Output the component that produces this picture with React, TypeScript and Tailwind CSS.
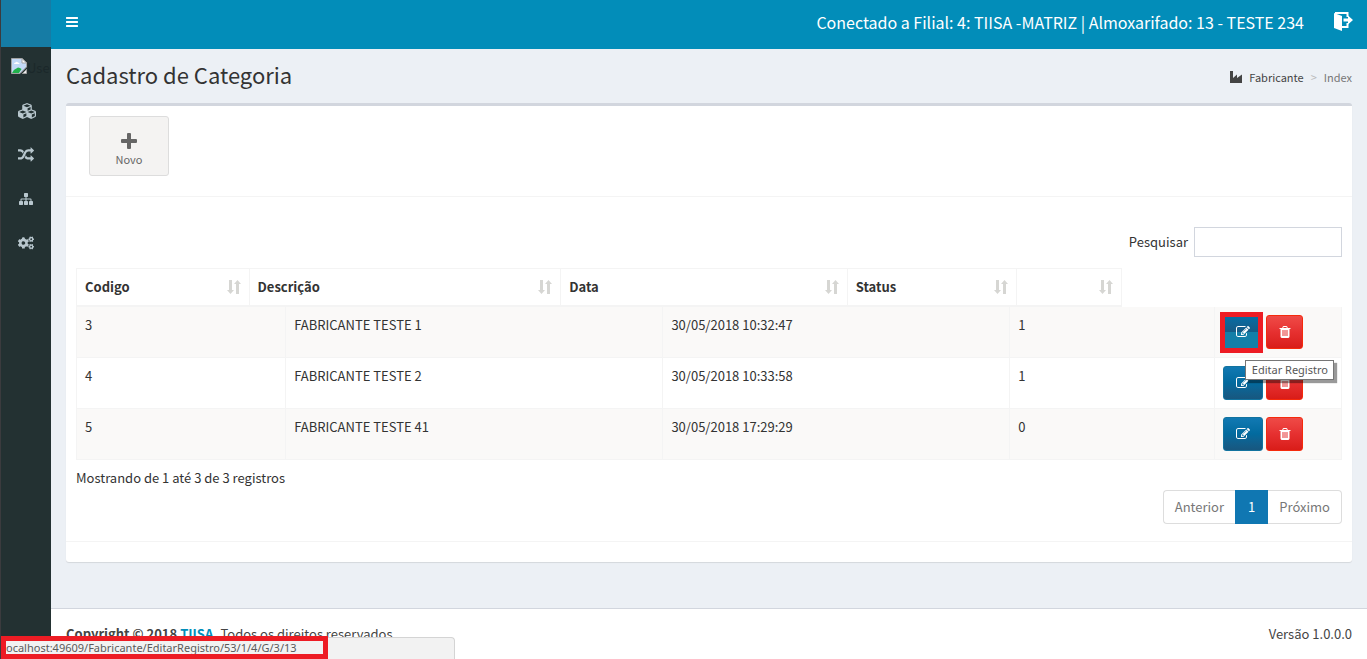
import type { ReactNode } from "react";
import { FaCogs, FaCubes } from "react-icons/fa";

const BARS =
  "M1664 1344v128q0 26-19 45t-45 19h-1408q-26 0-45-19t-19-45v-128q0-26 19-45t45-19h1408q26 0 45 19t19 45zm0-512v128q0 26-19 45t-45 19h-1408q-26 0-45-19t-19-45v-128q0-26 19-45t45-19h1408q26 0 45 19t19 45zm0-512v128q0 26-19 45t-45 19h-1408q-26 0-45-19t-19-45v-128q0-26 19-45t45-19h1408q26 0 45 19t19 45z";
const EDIT =
  "M888 1184l116-116-152-152-116 116v56h96v96h56zm440-720q-16-16-33 1l-350 350q-17 17-1 33t33-1l350-350q17-17 1-33zm80 594v190q0 119-84.5 203.5t-203.5 84.5h-832q-119 0-203.5-84.5t-84.5-203.5v-832q0-119 84.5-203.5t203.5-84.5h832q63 0 117 25 15 7 18 23 3 17-9 29l-49 49q-14 14-32 8-23-6-45-6h-832q-66 0-113 47t-47 113v832q0 66 47 113t113 47h832q66 0 113-47t47-113v-126q0-13 9-22l64-64q15-15 35-7t20 29zm-96-738l288 288-672 672h-288v-288zm444 132l-92 92-288-288 92-92q28-28 68-28t68 28l152 152q28 28 28 68t-28 68z";
const TRASH =
  "M704 1376v-704q0-14-9-23t-23-9h-64q-14 0-23 9t-9 23v704q0 14 9 23t23 9h64q14 0 23-9t9-23zm256 0v-704q0-14-9-23t-23-9h-64q-14 0-23 9t-9 23v704q0 14 9 23t23 9h64q14 0 23-9t9-23zm256 0v-704q0-14-9-23t-23-9h-64q-14 0-23 9t-9 23v704q0 14 9 23t23 9h64q14 0 23-9t9-23zm-544-992h448l-48-117q-7-9-17-11h-317q-10 2-17 11zm928 32v64q0 14-9 23t-23 9h-96v948q0 83-47 143.5t-113 60.5h-832q-66 0-113-58.5t-47-141.5v-952h-96q-14 0-23-9t-9-23v-64q0-14 9-23t23-9h309l70-167q15-37 54-63t79-26h320q40 0 79 26t54 63l70 167h309q14 0 23 9t9 23z";
const RANDOM =
  "M666 481q-60 92-137 273-22-45-37-72.5t-40.5-63.5-51-56.5-63-35-81.5-14.5h-224q-14 0-23-9t-9-23v-192q0-14 9-23t23-9h224q250 0 410 225zm1126 799q0 14-9 23l-320 320q-9 9-23 9-13 0-22.5-9.5t-9.5-22.5v-192q-32 0-85 .5t-81 1-73-1-71-5-64-10.5-63-18.5-58-28.5-59-40-55-53.5-56-69.5q59-93 136-273 22 45 37 72.5t40.5 63.5 51 56.5 63 35 81.5 14.5h256v-192q0-14 9-23t23-9q12 0 24 10l319 319q9 9 9 23zm0-896q0 14-9 23l-320 320q-9 9-23 9-13 0-22.5-9.5t-9.5-22.5v-192h-256q-48 0-87 15t-69 45-51 61.5-45 77.5q-32 62-78 171-29 66-49.5 111t-54 105-64 100-74 83-90 68.5-106.5 42-128 16.5h-224q-14 0-23-9t-9-23v-192q0-14 9-23t23-9h224q48 0 87-15t69-45 51-61.5 45-77.5q32-62 78-171 29-66 49.5-111t54-105 64-100 74-83 90-68.5 106.5-42 128-16.5h256v-192q0-14 9-23t23-9q12 0 24 10l319 319q9 9 9 23z";
const SITEMAP =
  "M1792 1248v320q0 40-28 68t-68 28h-320q-40 0-68-28t-28-68v-320q0-40 28-68t68-28h96v-192h-512v192h96q40 0 68 28t28 68v320q0 40-28 68t-68 28h-320q-40 0-68-28t-28-68v-320q0-40 28-68t68-28h96v-192h-512v192h96q40 0 68 28t28 68v320q0 40-28 68t-68 28h-320q-40 0-68-28t-28-68v-320q0-40 28-68t68-28h96v-192q0-52 38-90t90-38h512v-192h-96q-40 0-68-28t-28-68v-320q0-40 28-68t68-28h320q40 0 68 28t28 68v320q0 40-28 68t-68 28h-96v192h512q52 0 90 38t38 90v192h96q40 0 68 28t28 68z";

function Glyph({ d, className }: { d: string; className: string }) {
  return (
    <svg viewBox="0 0 1792 1792" fill="currentColor" aria-hidden="true" className={className}>
      <path d={d} />
    </svg>
  );
}

function BrokenImage() {
  return (
    <svg viewBox="0 0 16 16" aria-hidden="true" className="size-4 shrink-0">
      <path d="M.5.5h10.5l4.500 4.500v4L9 15.500H.5z" fill="#c3d9f7" stroke="#a3a3a3" />
      <path d="M11 .5V5h4.500z" fill="#fff" stroke="#a3a3a3" />
      <path d="M3 6q0-1.500 1.500-1.500Q5.500 3 7 4.500 8.500 4.500 8.500 6z" fill="#fff" />
      <path d="M1 15q2-4 6-5.500 2 0 3.500 1.500L8 15z" fill="#22b14c" />
      <path d="M11.500 15.500l4-4v4z" fill="#eee" stroke="#a3a3a3" />
    </svg>
  );
}

function SortIcon() {
  return (
    <svg viewBox="0 0 14 14" fill="#d6d6d3" aria-hidden="true" className="size-3.5 shrink-0">
      <path d="M2 0h3v10h2L3.500 14 0 10h2zM9 14h3V4h2L10.500 0 7 4h2z" />
    </svg>
  );
}

function SideLink({ label, children }: { label: string; children: ReactNode }) {
  return (
    <a href="#" aria-label={label} className="flex h-11 items-center justify-center text-[#b8c7ce]">
      {children}
    </a>
  );
}

const columns = [
  { label: "Codigo", width: "w-[16.600%]" },
  { label: "Descrição", width: "w-[29.800%]" },
  { label: "Data", width: "w-[27.400%]" },
  { label: "Status", width: "w-[16.200%]" },
  { label: "", width: "w-[10%]" },
];

const rows = [
  { id: 3, name: "FABRICANTE TESTE 1", date: "30/05/2018 10:32:47", status: 1 },
  { id: 4, name: "FABRICANTE TESTE 2", date: "30/05/2018 10:33:58", status: 1 },
  { id: 5, name: "FABRICANTE TESTE 41", date: "30/05/2018 17:29:29", status: 0 },
];

const cell = "border-r border-b border-[#f4f4f4] px-2 pt-2 text-left align-top";

export default function App() {
  return (
    <div className="flex min-h-screen bg-[#ecf0f5] font-['Noto_Sans_CJK_SC',sans-serif] text-[13px] leading-5 text-[#333]">
      <aside className="w-[51px] shrink-0 overflow-hidden border-l border-[#3b3b3e] bg-[#233132]">
        <div className="h-[47px] bg-[#167ca5]" />
        <div className="flex h-[42px] items-center overflow-hidden pb-1 pl-2.5 text-[#1b282a]">
          <BrokenImage />
          <span className="pt-1">User</span>
        </div>
        <nav>
          <SideLink label="Cadastros">
            <FaCubes className="ml-0.5 size-[18px]" />
          </SideLink>
          <SideLink label="Movimentos">
            <Glyph d={RANDOM} className="size-4" />
          </SideLink>
          <SideLink label="Estrutura">
            <Glyph d={SITEMAP} className="size-3.5" />
          </SideLink>
          <SideLink label="Configurações">
            <FaCogs className="size-4" />
          </SideLink>
        </nav>
      </aside>

      <div className="flex min-w-0 flex-1 flex-col">
        <header className="flex h-[49px] shrink-0 items-center bg-[#028db9] pr-3.5 pl-3.5 text-white">
          <button type="button" aria-label="Alternar menu" className="pb-1.5">
            <Glyph d={BARS} className="size-3.5" />
          </button>
          <p className="mr-[30px] ml-auto pb-1.5 text-[16px] leading-6">
            Conectado a Filial: 4: TIISA -MATRIZ | Almoxarifado: 13 - TESTE 234
          </p>
          <a href="#" aria-label="Sair" className="pb-1.5">
            <svg viewBox="0 0 19 19" aria-hidden="true" className="size-[19px]">
              <path d="M1 1h12.500v4M13.500 11v4H8" fill="none" stroke="#fff" strokeWidth="2" />
              <path d="M0 1l8 3v15l-8-3z" fill="#fff" />
              <path d="M9.500 6.500h4.500V3.500l5 4.500-5 4.500V9.500H9.500z" fill="#fff" />
            </svg>
          </a>
        </header>

        <main className="flex-1 px-[15px] pb-[46px]">
          <div className="flex h-[54px] items-center justify-between">
            <h1 className="pb-1 text-[22px] leading-7">Cadastro de Categoria</h1>
            <nav aria-label="Trilha" className="flex items-center pt-0.5 text-[11px]">
              <a href="#" className="flex items-center gap-[7px] text-[#444]">
                <svg viewBox="0 0 12 12" fill="currentColor" aria-hidden="true" className="size-3">
                  <path d="M0 0h3v7l4-3.500V7l5-3.500V12H0z" />
                </svg>
                Fabricante
              </a>
              <span className="px-[7px] text-[#bbb]">&gt;</span>
              <span className="text-[#777]">Index</span>
            </nav>
          </div>

          <section className="rounded-[3px] border-t-[3px] border-[#d2d6de] bg-white shadow-[0_1px_1px_rgba(0,0,0,0.1)]">
            <div className="border-b border-[#f4f4f4] pt-2.5 pr-2.5 pb-5 pl-[23px]">
              <button
                type="button"
                className="flex h-[60px] w-20 flex-col items-center rounded-[3px] border border-[#ddd] bg-[#f4f3f2] pt-4 text-[11px] text-[#666]"
              >
                <svg viewBox="0 0 16 16" fill="currentColor" aria-hidden="true" className="size-4 shrink-0">
                  <path d="M6 1q0-1 1-1h2q1 0 1 1v5h5q1 0 1 1v2q0 1-1 1h-5v5q0 1-1 1H7q-1 0-1-1v-5H1q-1 0-1-1V7q0-1 1-1h5z" />
                </svg>
                Novo
              </button>
            </div>

            <div className="px-2.5 pt-[30px] pb-[17px]">
              <div className="flex items-center justify-end gap-1.5">
                <label htmlFor="search">Pesquisar</label>
                <input id="search" type="text" className="h-[30px] w-[148px] border border-[#d2d6de] bg-white px-2 outline-none" />
              </div>

              <table className="mt-[11px] block border-separate border-spacing-0">
                <thead className="table w-[82.600%] table-fixed border-separate border-spacing-0">
                  <tr>
                    {columns.map((c, i) => (
                      <th
                        key={i}
                        scope="col"
                        className={`${c.width} h-[39px] border-t border-r border-b-2 border-[#f4f4f4] px-2 text-left font-bold first:border-l`}
                      >
                        <div className="flex items-center justify-between">
                          <span>{c.label}</span>
                          <SortIcon />
                        </div>
                      </th>
                    ))}
                  </tr>
                </thead>
                <tbody className="table w-full table-fixed border-separate border-spacing-0">
                  {rows.map((r, i) => (
                    <tr key={r.id} className="h-[51px] odd:bg-[#faf9f8]">
                      <td className={`${cell} w-[16.600%] border-l`}>{r.id}</td>
                      <td className={`${cell} w-[29.800%]`}>{r.name}</td>
                      <td className={`${cell} w-[27.400%]`}>{r.date}</td>
                      <td className={`${cell} w-[16.200%]`}>{r.status}</td>
                      <td className={`${cell} w-[10%]`}>
                        <div className="relative flex gap-[3px]">
                          <a
                            href="#"
                            aria-label="Editar Registro"
                            className={
                              i === 0
                                ? "flex h-[34px] w-10 items-center justify-center rounded-[3px] bg-linear-to-b from-[#006fa8] from-0% via-[#165a85] via-50% to-[#147fa8] to-50% text-white"
                                : "flex h-[34px] w-10 items-center justify-center rounded-[3px] border border-[#12739f] bg-linear-to-b from-[#1179b3] via-[#026a9e] to-[#17577f] text-white"
                            }
                          >
                            <Glyph d={EDIT} className="size-3.5" />
                          </a>
                          <a
                            href="#"
                            aria-label="Excluir Registro"
                            className="flex h-[34px] w-[37px] items-center justify-center rounded-[3px] border border-[#f52a0c] bg-linear-to-b from-[#ef4a47] via-[#e63030] to-[#d91c18] text-white"
                          >
                            <Glyph d={TRASH} className="size-3.5" />
                          </a>
                          {i === 0 && (
                            <>
                              <span className="absolute -top-[3px] -left-[3px] h-[41px] w-[43px] border-[5px] border-[#ed1c24]" />
                              <span
                                role="tooltip"
                                className="absolute top-[45px] left-[22px] z-10 flex h-5 w-[89px] items-center justify-center border border-[#767676] bg-white font-['Noto_Sans',sans-serif] text-[11px] whitespace-nowrap text-[#575757] shadow-[3px_3px_1px_rgba(0,0,0,0.4)]"
                              >
                                Editar Registro
                              </span>
                            </>
                          )}
                        </div>
                      </td>
                    </tr>
                  ))}
                </tbody>
              </table>

              <p className="mt-2">Mostrando de 1 até 3 de 3 registros</p>
              <nav aria-label="Paginação" className="mt-0.5 flex justify-end">
                <button type="button" className="h-[34px] rounded-l border border-r-0 border-[#ddd] px-[11px] text-[#777]">
                  Anterior
                </button>
                <button type="button" aria-current="page" className="h-[34px] bg-[#1077b2] px-[13px] text-white">
                  1
                </button>
                <button type="button" className="h-[34px] rounded-r border border-l-0 border-[#ddd] px-[11px] text-[#777]">
                  Próximo
                </button>
              </nav>
            </div>
            <div className="h-[21px] border-t border-[#f4f4f4]" />
          </section>
        </main>

        <footer className="flex h-[51px] shrink-0 justify-between border-t border-[#d2d6de] bg-white px-[15px] pt-[15px] text-[#444]">
          <p>
            <strong>
              Copyright © 2018{" "}
              <a href="#" className="text-[#028db9]">
                TIISA
              </a>
              .
            </strong>{" "}
            Todos os direitos reservados.
          </p>
          <p>Versão 1.0.0.0</p>
        </footer>
      </div>

      <div className="fixed bottom-0 left-px h-[22px] w-[454px] rounded-tr border-t border-r border-[#d4d4d4] bg-[#f2f2f2]">
        <div className="absolute bottom-0 left-0 flex h-[23px] w-[327px] items-center overflow-hidden border-[5px] border-[#ed1c24] font-['Noto_Sans',sans-serif] text-[11px] whitespace-nowrap text-[#5a5a5a]">
          ocalhost:49609/Fabricante/EditarRegistro/53/1/4/G/3/13
        </div>
      </div>
    </div>
  );
}
